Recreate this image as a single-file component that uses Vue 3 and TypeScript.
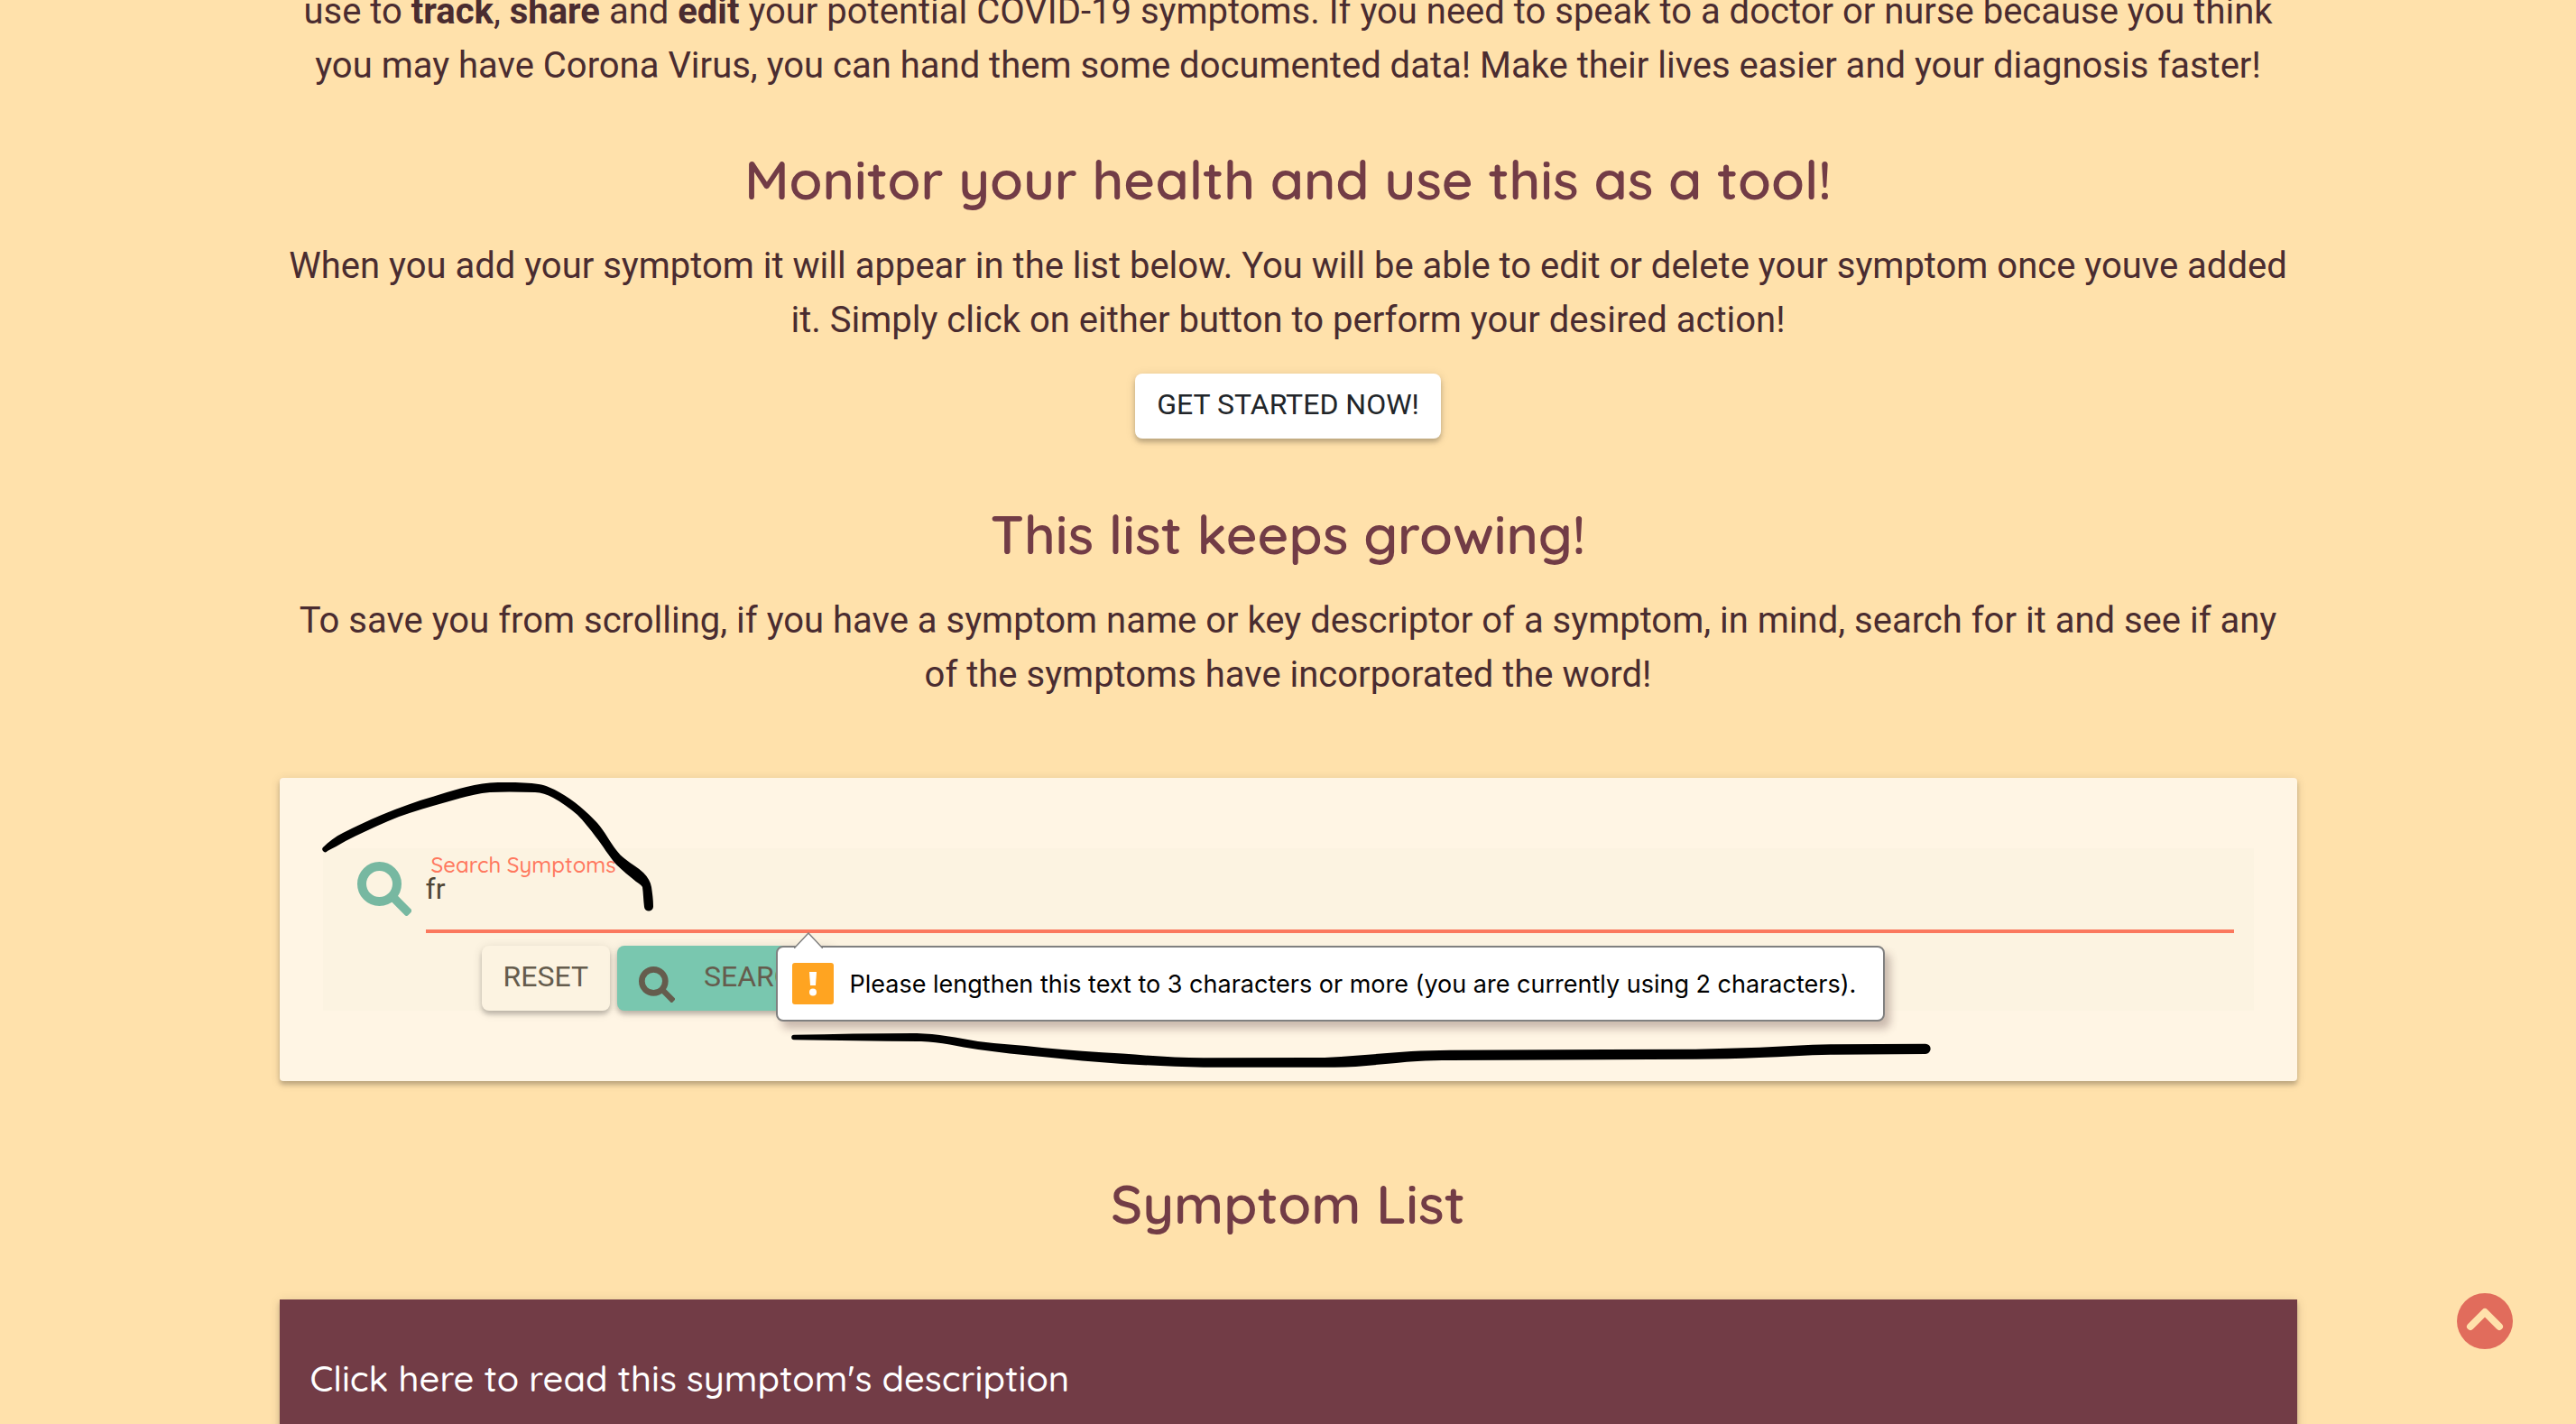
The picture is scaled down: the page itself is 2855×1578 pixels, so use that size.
<script setup lang="ts">
import { ref } from 'vue'

const query = ref('fr')
const minLength = 3

function reset(): void {
  query.value = ''
}
</script>

<template>
  <div class="page">
    <main class="container">
      <section class="block">
        <p class="copy">
          use to <strong>track</strong>, <strong>share</strong> and <strong>edit</strong> your potential COVID-19 symptoms. If you need to speak to a doctor or nurse because you think you may have Corona Virus, you can hand them some documented data! Make their lives easier and your diagnosis faster!
        </p>
      </section>

      <section class="block">
        <h2 class="title">Monitor your health and use this as a tool!</h2>
        <p class="copy">
          When you add your symptom it will appear in the list below. You will be able to edit or delete your symptom once youve added it. Simply click on either button to perform your desired action!
        </p>
        <button class="btn btn-start" type="button">GET STARTED NOW!</button>
      </section>

      <section class="block">
        <h2 class="title">This list keeps growing!</h2>
        <p class="copy">
          To save you from scrolling, if you have a symptom name or key descriptor of a symptom, in mind, search for it and see if any of the symptoms have incorporated the word!
        </p>
      </section>

      <section class="card">
        <form class="panel" @submit.prevent>
          <div class="row">
            <svg class="icon-large" viewBox="0 0 60 60" aria-hidden="true">
              <circle cx="24.5" cy="24.5" r="19.5" fill="none" stroke="currentColor" stroke-width="10" />
              <rect x="21" y="-5" width="26" height="9.500" rx="2.500" fill="currentColor" transform="translate(24.5 24.5) rotate(45)" />
            </svg>
            <div class="field">
              <label class="label" for="query">Search Symptoms</label>
              <input id="query" v-model="query" class="input" type="text" :minlength="minLength" autocomplete="off" />
              <div class="bubble" role="alert">
                <svg class="bubble-arrow" viewBox="0 0 32 18" aria-hidden="true">
                  <path d="M0 18 L16 1 L32 18" fill="#fff" stroke="#808080" stroke-width="1.500" />
                </svg>
                <svg class="bubble-icon" viewBox="0 0 46 46" aria-hidden="true">
                  <rect width="46" height="46" rx="3" fill="#ffa421" />
                  <path d="M19 10h8l-1 15h-6z" fill="#fff" />
                  <circle cx="23" cy="32.500" r="4" fill="#fff" />
                </svg>
                <span>Please lengthen this text to 3 characters or more (you are currently using 2 characters).</span>
              </div>
            </div>
          </div>
          <div class="actions">
            <button class="btn btn-reset" type="button" @click="reset">RESET</button>
            <button class="btn btn-search" type="submit">
              <svg class="icon-small" viewBox="0 0 60 60" aria-hidden="true">
                <circle cx="24.5" cy="24.5" r="19.5" fill="none" stroke="currentColor" stroke-width="10" />
                <rect x="21" y="-5" width="26" height="9.500" rx="2.500" fill="currentColor" transform="translate(24.5 24.5) rotate(45)" />
              </svg>
              SEARCH
            </button>
          </div>
        </form>

        <svg class="stroke stroke-arc" viewBox="0 0 420 160" aria-hidden="true">
          <path d="M48 77 C54 71 62 65 70 61 C84 54 98 47 113 41 C132 33 151 26 170 20.700 C192 14 213 7 233 5.500 C250 4.500 273 5 287 7 C295 8 303 12 310 16 C326 25 340 37 352 50 C360 59 366 71 373 80 C376 84 379 87 383 90 C390 96 397 99 403 105 C408 110 411 115 412 121 C413 128 414 135 414 142 A5 5 0 0 1 404 143 C403 135 403 128 402 121 C401 119 398 117 395 115 C388 109 380 103 373 96 C365 87 358 75 350 65 C344 57 337 48 330 41 C322 34 312 27 303 22 C296 18 290 16.500 283 16 C267 15.500 250 15 233 16 C212 18 191 25 170 31 C153 36 136 41 120 48 C104 55 88 62 73 70 C66 74 59 78 53 81 A3 3 0 0 1 48 77Z" />
        </svg>
        <svg class="stroke stroke-underline" viewBox="0 0 1270 40" aria-hidden="true">
          <path d="M4 1.700 C48 1 92 0 136 0 C160 0 184 5 208 9 C231 12 255 13 279 16 C309 19 338 21 368 22.500 C398 25 428 27 458 27.300 L574 27 C586 27 598 27 610 26 C636 24 662 22 688 20 C702 19 716 19 731 18.700 L1003 17.700 C1027 17 1050 16.500 1074 15.700 C1100 15 1126 12.500 1153 12.300 L1258 11.700 A5.600 5.600 0 0 1 1258 23 L1153 23.700 C1126 24 1100 26 1074 27 C1050 28 1027 28.500 1003 28.700 L731 30 C719 30 707 30 695 31 C664 33 634 37.500 603 37.700 L458 37.700 C428 37 398 35.500 368 34 C338 32 309 29 279 26 C255 24 231 21 208 18 C187 15 166 9.500 145 9 C98 9 51 8 4 7.300 A2.800 2.800 0 0 1 4 1.700Z" />
        </svg>
      </section>

      <h2 class="title title-list">Symptom List</h2>

      <section class="symptom">
        <button class="symptom-head" type="button">Click here to read this symptom's description</button>
      </section>
    </main>

    <a class="to-top" href="#app" aria-label="Back to top">
      <svg viewBox="0 0 62 62" aria-hidden="true">
        <circle cx="31" cy="31" r="31" fill="#e16c5c" />
        <path d="M15 37 L31 21 L47 37" fill="none" stroke="#ffe1ab" stroke-width="8" stroke-linecap="round" stroke-linejoin="round" />
      </svg>
    </a>
  </div>
</template>

<style>
body {
  margin: 0;
  background: #ffe1ab;
}
</style>

<style scoped>
.page {
  height: 100vh;
  overflow: hidden;
  background: #ffe1ab;
  color: #4a2c30;
  font-family: Roboto, "Liberation Sans", sans-serif;
}

.container {
  display: flex;
  flex-direction: column;
  box-sizing: border-box;
  width: 2236px;
  max-width: 92%;
  margin: -17px auto 0;
}

.block {
  display: flex;
  flex-direction: column;
  align-items: center;
  text-align: center;
}

.copy {
  margin: 0;
  font-size: 40px;
  line-height: 60px;
}

.title {
  margin: 60px 0 30px;
  color: #723c46;
  font-family: Quicksand, Lato, sans-serif;
  font-size: 60px;
  font-weight: 600;
  line-height: 72px;
  text-align: center;
}

.btn {
  display: inline-flex;
  align-items: center;
  height: 72px;
  padding: 0 24px 4px;
  border: 0;
  border-radius: 8px;
  font-family: inherit;
  font-size: 32px;
  box-shadow: 0 4px 5px rgba(0, 0, 0, 0.2), 0 2px 12px rgba(0, 0, 0, 0.12);
}

.btn-start {
  margin: 29px 0 10px;
  background: #fff;
  color: #212529;
}

.card {
  position: relative;
  margin-top: 84px;
  padding: 78px 48px;
  border-radius: 4px;
  background: #fff5e4;
  box-shadow: 0 4px 5px rgba(0, 0, 0, 0.2), 0 2px 12px rgba(0, 0, 0, 0.12);
}

.panel {
  background: #fcf3e1;
}

.row {
  display: flex;
  gap: 16px;
  padding: 0 22px 0 38px;
}

.icon-large {
  flex: none;
  width: 60px;
  height: 60px;
  margin-top: 15px;
  color: #77b8a1;
}

.field {
  position: relative;
  flex: 1;
}

.label {
  position: absolute;
  top: 2px;
  left: 6px;
  color: #ff785e;
  font-family: Quicksand, Lato, sans-serif;
  font-size: 24px;
  font-weight: 500;
  line-height: 32px;
}

.input {
  display: block;
  box-sizing: border-box;
  width: 100%;
  height: 94px;
  padding: 0;
  border: 0;
  border-bottom: 4px solid #fb785e;
  outline: 0;
  background: transparent;
  color: #4f4635;
  font-family: inherit;
  font-size: 32px;
}

.actions {
  display: flex;
  gap: 8px;
  margin-top: 14px;
  padding-left: 176px;
}

.btn-reset {
  background: #fcf3e1;
  color: #655c4d;
}

.btn-search {
  gap: 32px;
  background: #79c7af;
  color: #655c4d;
}

.icon-small {
  width: 40px;
  height: 40px;
  margin-top: 18px;
}

.bubble {
  position: absolute;
  z-index: 2;
  top: 108px;
  left: 388px;
  display: flex;
  align-items: center;
  gap: 18px;
  box-sizing: border-box;
  height: 84px;
  padding: 0 30px 0 16px;
  border: 2px solid #808080;
  border-radius: 8px;
  background: #fff;
  color: #000;
  font-family: Inter, sans-serif;
  font-size: 27px;
  white-space: nowrap;
  box-shadow: 6px 8px 10px rgba(80, 50, 50, 0.3);
}

.bubble-arrow {
  position: absolute;
  top: -17px;
  left: 18px;
  width: 32px;
  height: 18px;
}

.bubble-icon {
  flex: none;
  width: 46px;
  height: 46px;
}

.stroke {
  position: absolute;
  z-index: 3;
  overflow: visible;
  pointer-events: none;
}

.stroke-arc {
  top: 0;
  left: 0;
  width: 420px;
  height: 160px;
}

.stroke-underline {
  top: 283px;
  left: 566px;
  width: 1270px;
  height: 40px;
}

.title-list {
  margin: 100px 0 70px;
}

.symptom {
  background: #723c46;
  box-shadow: 0 4px 5px rgba(0, 0, 0, 0.2), 0 2px 12px rgba(0, 0, 0, 0.12);
}

.symptom-head {
  display: block;
  width: 100%;
  padding: 57px 34px 64px;
  border: 0;
  background: transparent;
  color: #fff;
  font-family: Quicksand, Lato, sans-serif;
  font-size: 40px;
  font-weight: 500;
  line-height: 60px;
  text-align: left;
}

.to-top {
  position: fixed;
  right: 70px;
  bottom: 83px;
  width: 62px;
  height: 62px;
}

.to-top svg {
  display: block;
}
</style>
